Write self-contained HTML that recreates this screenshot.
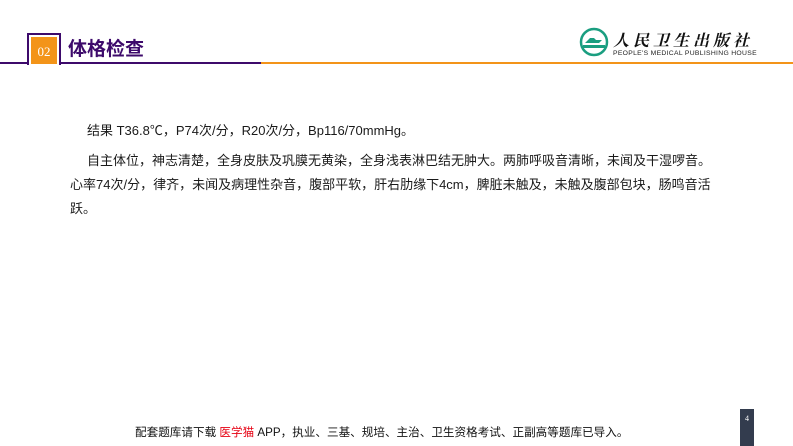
<!DOCTYPE html>
<html><head><meta charset="utf-8"><style>
body{margin:0;width:793px;height:446px;position:relative;background:#fff;font-family:"Liberation Sans","Noto Sans CJK SC",sans-serif;overflow:hidden}
.a{position:absolute}
p{margin:0}
</style></head><body>
<div class="a" style="left:0;top:62px;width:261px;height:2px;background:#3d0a6b"></div>
<div class="a" style="left:261px;top:62px;width:532px;height:2px;background:#f39419"></div>
<div class="a" style="left:27px;top:33px;width:30px;height:30px;border:2px solid #3d0a6b;border-bottom:none;background:#fff"></div>
<div class="a" style="left:31px;top:37px;width:26px;height:27px;background:#f39419;color:#fff;font-family:'Liberation Serif',serif;font-size:13px;line-height:30px;text-align:center">02</div>
<div class="a" style="left:68px;top:34px;font-size:19px;font-weight:bold;color:#3d0a6b">体格检查</div>
<svg class="a" style="left:577px;top:27px" width="34" height="30" viewBox="0 0 34 30"><circle cx="17" cy="15" r="13" fill="none" stroke="#1a9e80" stroke-width="2.5"/><path d="M8 16h14l3-3h-6l-2-2h-4zM6 18h22v3H6z" fill="#1a9e80"/></svg>
<div class="a" style="left:613px;top:28px;font-size:16px;font-weight:bold;letter-spacing:4px;color:#111;font-family:'Noto Serif CJK SC',serif;font-style:italic">人民卫生出版社</div>
<div class="a" style="left:613px;top:50px;font-size:6.8px;color:#222;letter-spacing:0.3px">PEOPLE'S MEDICAL PUBLISHING HOUSE</div>
<div class="a" style="left:70px;top:119px;width:648px;font-size:13px;color:#1a1a1a;line-height:24px">
<p style="text-indent:17px;margin-bottom:6px">结果 T36.8℃，P74次/分，R20次/分，Bp116/70mmHg。</p>
<p style="text-indent:17px">自主体位，神志清楚，全身皮肤及巩膜无黄染，全身浅表淋巴结无肿大。两肺呼吸音清晰，未闻及干湿啰音。心率74次/分，律齐，未闻及病理性杂音，腹部平软，肝右肋缘下4cm，脾脏未触及，未触及腹部包块，肠鸣音活跃。</p>
</div>
<div class="a" style="left:135px;top:424px;font-size:11.6px;color:#111">配套题库请下载 <span style="color:#e60012">医学猫</span> APP，执业、三基、规培、主治、卫生资格考试、正副高等题库已导入。</div>
<div class="a" style="left:740px;top:409px;width:14px;height:37px;background:#333c4e;color:#fff;font-size:8px;text-align:center;line-height:20px;font-family:'Liberation Serif',serif">4</div>
</body></html>
